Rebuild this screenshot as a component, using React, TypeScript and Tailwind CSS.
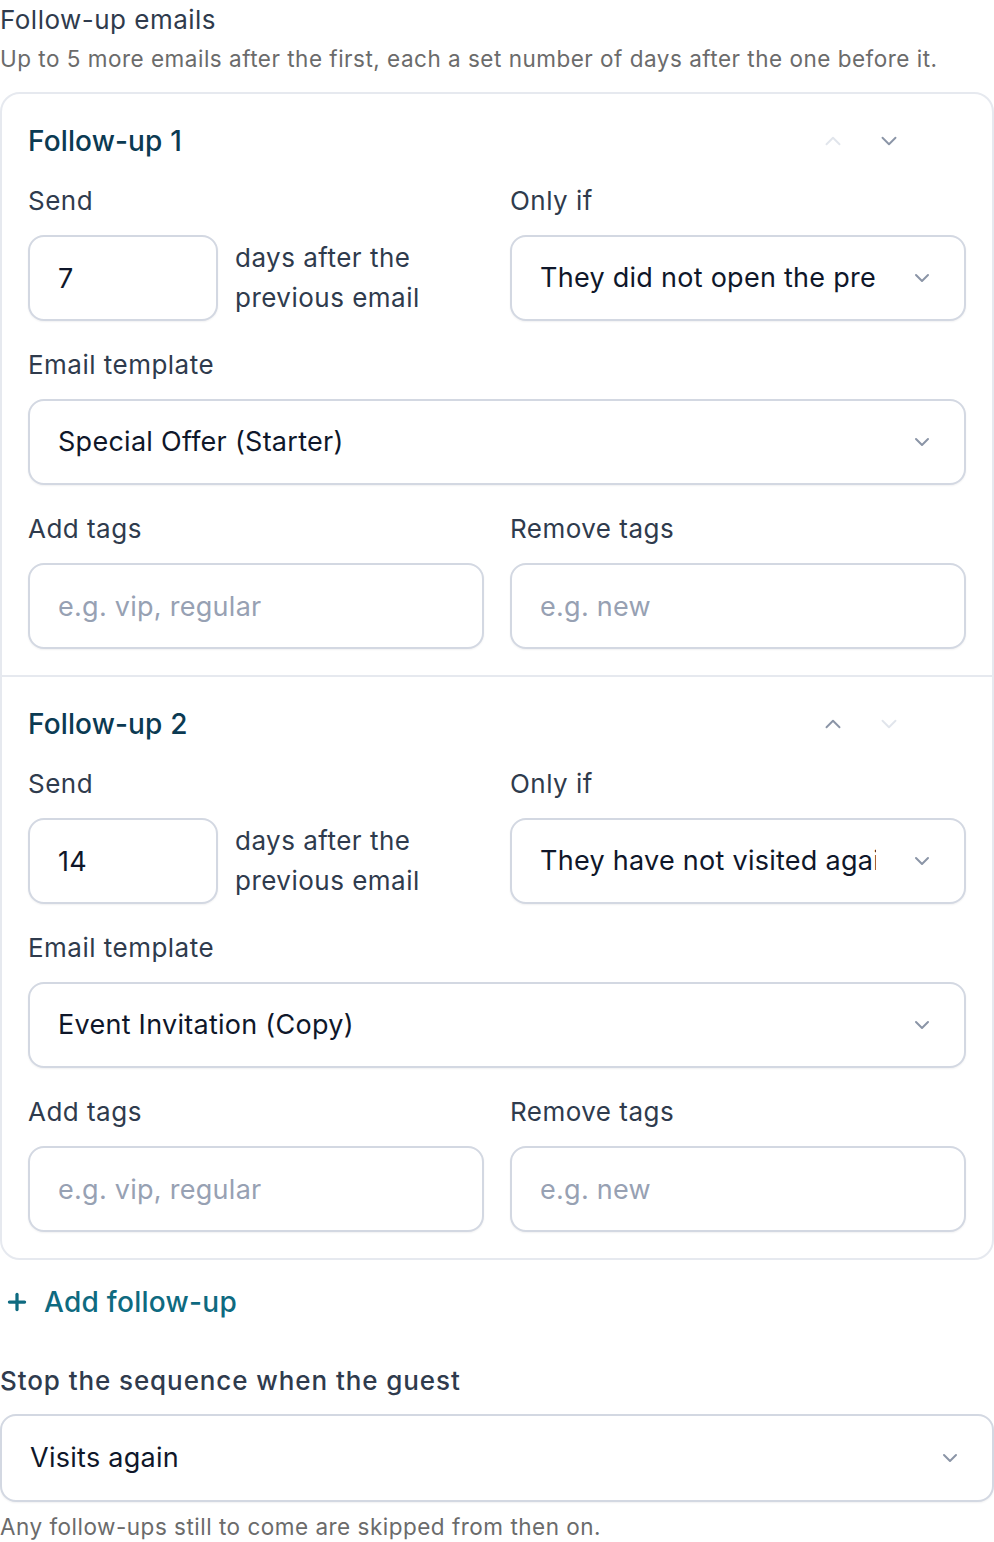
import { ChevronDown, ChevronUp, Plus } from 'lucide-react';

type FollowUp = {
  id: number;
  days: string;
  condition: string;
  template: string;
};

const followUps: FollowUp[] = [
  { id: 1, days: '7', condition: 'They did not open the previous email', template: 'Special Offer (Starter)' },
  { id: 2, days: '14', condition: 'They have not visited again', template: 'Event Invitation (Copy)' }
];

const fieldBase =
  'h-[86px] rounded-[16px] border-2 border-[#d3d8e2] bg-white px-[28px] text-[27px] tracking-[0.01em] text-[#0f172a] shadow-[0_1px_2px_rgba(15,23,42,0.06)] outline-none placeholder:text-[#97a1b3]';

function Label({ children }: { children: React.ReactNode }) {
  return <span className="mb-[18px] block text-[26px] leading-[32px] text-[#2f3b4d]">{children}</span>;
}

function Select({ value }: { value: string }) {
  return (
    <div className="relative">
      <div className={`${fieldBase} flex w-full items-center overflow-hidden whitespace-nowrap pr-[88px]`}>
        <span className="block overflow-hidden">{value}</span>
      </div>
      <ChevronDown
        className="pointer-events-none absolute right-[32px] top-1/2 h-[24px] w-[24px] -translate-y-1/2 text-[#8b95a7]"
        strokeWidth={2}
      />
    </div>
  );
}

function FollowUpCard({ item, first, last }: { item: FollowUp; first: boolean; last: boolean }) {
  return (
    <div className={`flex flex-col gap-[28px] p-[26px] ${last ? '' : 'border-b-2 border-[#e6e9ef]'}`}>
      <div className="mb-[-5px] flex h-[42px] items-center justify-between">
        <h3 className="text-[28px] font-medium tracking-[0.005em] text-[#0b3a52]">Follow-up {item.id}</h3>
        <div className="mr-[64px] flex items-center gap-[30px]">
          <ChevronUp className={`h-[26px] w-[26px] ${first ? 'text-[#e1e5ec]' : 'text-[#8b95a7]'}`} strokeWidth={1.75} />
          <ChevronDown className={`h-[26px] w-[26px] ${last ? 'text-[#e1e5ec]' : 'text-[#8b95a7]'}`} strokeWidth={1.75} />
        </div>
      </div>

      <div className="grid grid-cols-2 gap-[26px]">
        <label className="block">
          <Label>Send</Label>
          <div className="flex items-center gap-[17px]">
            <input readOnly value={item.days} className={`${fieldBase} w-[190px] shrink-0`} />
            <span className="text-[26px] leading-[40px] text-[#2f3b4d]">
              days after the
              <br />
              previous email
            </span>
          </div>
        </label>
        <label className="block">
          <Label>Only if</Label>
          <Select value={item.condition} />
        </label>
      </div>

      <label className="block">
        <Label>Email template</Label>
        <Select value={item.template} />
      </label>

      <div className="grid grid-cols-2 gap-[26px]">
        <label className="block">
          <Label>Add tags</Label>
          <input placeholder="e.g. vip, regular" className={`${fieldBase} w-full`} />
        </label>
        <label className="block">
          <Label>Remove tags</Label>
          <input placeholder="e.g. new" className={`${fieldBase} w-full`} />
        </label>
      </div>
    </div>
  );
}

export default function App() {
  return (
    <div className="w-[994px] bg-white font-['Inter',sans-serif] tracking-[0.03em]">
      <h2 className="pt-[1px] text-[26px] leading-[38px] text-[#2f3b4d]">Follow-up emails</h2>
      <p className="mt-[5px] text-[22.5px] leading-[30px] tracking-[0.022em] text-[#6b6b6b]">
        Up to 5 more emails after the first, each a set number of days after the one before it.
      </p>

      <div className="mt-[18px] overflow-hidden rounded-[20px] border-2 border-[#e6e9ef]">
        {followUps.map((item, index) => (
          <FollowUpCard key={item.id} item={item} first={index === 0} last={index === followUps.length - 1} />
        ))}
      </div>

      <button
        type="button"
        className="mt-[21px] flex items-center gap-[14px] pl-[4px] text-[28px] font-medium tracking-[0.01em] text-[#0e6a80]"
      >
        <Plus className="h-[26px] w-[26px]" strokeWidth={3} />
        Add follow-up
      </button>

      <label className="mt-[42px] block">
        <span className="mb-[17px] block text-[26px] font-medium leading-[32px] tracking-[0.035em] text-[#2f3b4d]">
          Stop the sequence when the guest
        </span>
        <div className="[&>div>div]:h-[88px]">
          <Select value="Visits again" />
        </div>
      </label>
      <p className="mt-[10px] text-[22.5px] leading-[30px] tracking-[0.022em] text-[#6b6b6b]">
        Any follow-ups still to come are skipped from then on.
      </p>
    </div>
  );
}
